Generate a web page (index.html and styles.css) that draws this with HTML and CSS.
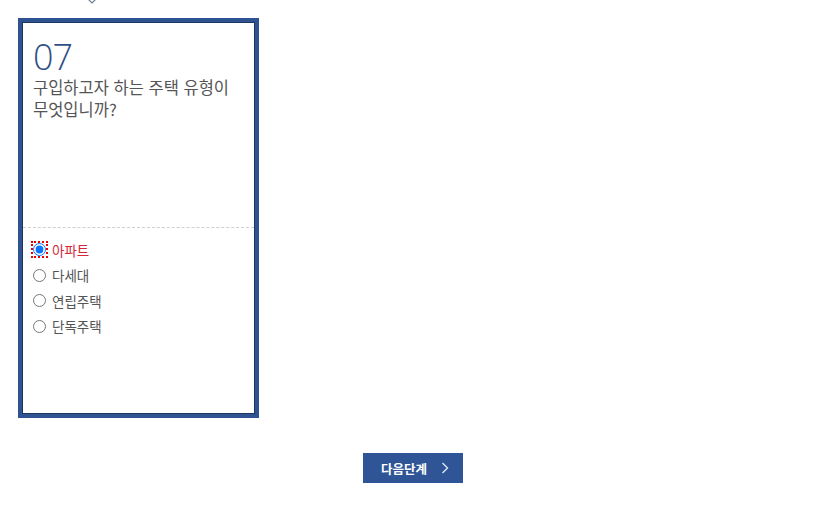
FILE: index.html
```html
<!DOCTYPE html>
<html lang="ko">
<head>
<meta charset="utf-8">
<link rel="stylesheet" href="styles.css">
</head>
<body>
<div class="top">
  <svg class="chev" width="14" height="10" viewBox="0 0 14 10"><path d="M1 1 L7 7 L13 1" fill="none" stroke="#6a7b94" stroke-width="1.2"/></svg>
</div>
<div class="card">
  <div class="card-inner">
    <div class="q">
      <div class="num">07</div>
      <div class="title">구입하고자 하는 주택 유형이<br>무엇입니까?</div>
    </div>
    <div class="opts">
      <label class="opt sel"><input type="radio" name="t" checked><span>아파트</span></label>
      <label class="opt"><input type="radio" name="t"><span>다세대</span></label>
      <label class="opt"><input type="radio" name="t"><span>연립주택</span></label>
      <label class="opt"><input type="radio" name="t"><span>단독주택</span></label>
    </div>
  </div>
</div>
<div class="actions">
  <button class="next">다음단계<svg width="8" height="12" viewBox="0 0 8 12"><path d="M1.5 1 L6.5 6 L1.5 11" fill="none" stroke="#dfe6f2" stroke-width="1.4"/></svg></button>
</div>
</body>
</html>
```
FILE: styles.css
```css
html, body { margin: 0; padding: 0; background: #fff; }
body { font-family: "Noto Sans CJK KR", "Noto Sans", sans-serif; width: 818px; height: 507px; overflow: hidden; }
.top { height: 18px; padding-left: 85px; overflow: hidden; }
.chev { display: block; margin-top: -4px; }
.card {
  margin-left: 18px; width: 233px; height: 392px;
  border: 4px solid #2f5391;
}
.card-inner {
  height: 390px; border: 1px solid #1b3561; display: flex; flex-direction: column;
}
.q { height: 205px; border-bottom: 1px dashed #cfcfcf; padding: 15px 0 0 10px; box-sizing: border-box; }
.num { font-family: "Open Sans", sans-serif; font-weight: 300; font-size: 36px; line-height: 38px; color: #2f4f86; letter-spacing: -1px; }
.title { font-size: 16.5px; line-height: 22px; color: #555; letter-spacing: 0; }
.opts { display: flex; flex-direction: column; padding: 9px 0 0 10px; }
.opt { display: flex; align-items: center; height: 25.5px; font-size: 13.5px; color: #555; }
.opt input { margin: 0 6px 0 0; width: 13px; height: 13px; accent-color: #0a74ff; }
.opt.sel input { outline: 2px dotted #e00; outline-offset: 0px; }
.opt.sel span { color: #d3263a; }
.actions { display: flex; justify-content: center; padding: 35px 0 0 8px; }
.next {
  width: 100px; height: 30px; border: 0; background: #2f5597; color: #fff;
  font-family: "Noto Sans CJK KR", sans-serif; font-size: 12.5px; font-weight: 700;
  display: flex; align-items: center; justify-content: center; gap: 14px; padding: 0 0 0 4px; cursor: pointer;
}
```
